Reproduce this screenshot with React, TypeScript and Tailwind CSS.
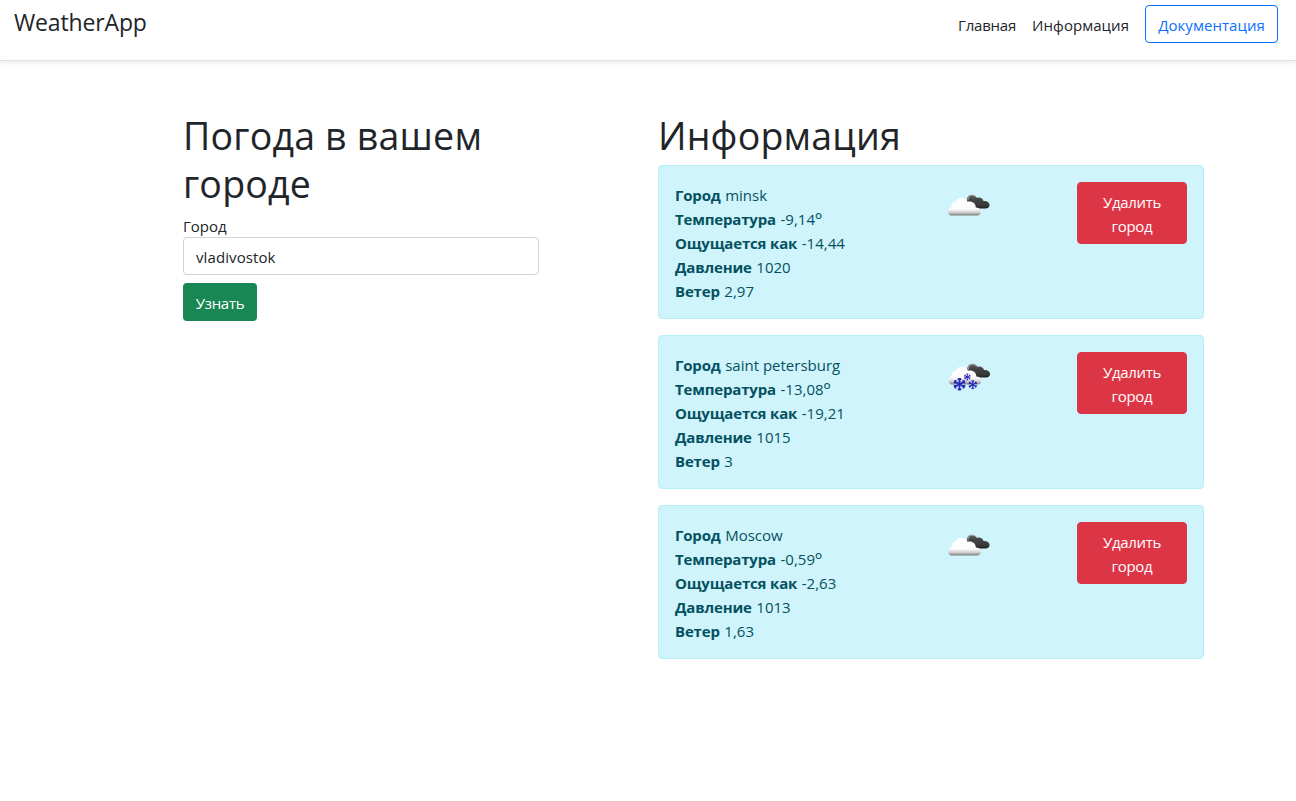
import React, { useState } from "react";

type City = {
  name: string;
  temp: string;
  feels: string;
  pressure: string;
  wind: string;
  snow?: boolean;
};

const cities: City[] = [
  { name: "minsk", temp: "-9,14", feels: "-14,44", pressure: "1020", wind: "2,97" },
  { name: "saint petersburg", temp: "-13,08", feels: "-19,21", pressure: "1015", wind: "3", snow: true },
  { name: "Moscow", temp: "-0,59", feels: "-2,63", pressure: "1013", wind: "1,63" },
];

function Flake({ x, y, r }: { x: number; y: number; r: number }) {
  return (
    <g transform={`translate(${x} ${y}) scale(${r})`} stroke="#2929bb" strokeWidth=".28" fill="none">
      {[0, 60, 120, 180, 240, 300].map((a) => (
        <path key={a} transform={`rotate(${a})`} d="M0 0V-1M-.26 -.92L0 -.68L.26 -.92" />
      ))}
    </g>
  );
}

function WeatherIcon({ snow, id }: { snow?: boolean; id: string }) {
  return (
    <svg className="block size-[50px]" viewBox="0 0 50 50">
      <defs>
        <linearGradient id={`${id}-light`} x1="0" y1="0" x2="0" y2="1">
          <stop offset="0" stopColor="#ffffff" />
          <stop offset=".62" stopColor="#fcfcfc" />
          <stop offset=".82" stopColor="#d2d2d2" />
          <stop offset="1" stopColor="#777777" />
        </linearGradient>
        <linearGradient id={`${id}-dark`} x1="0" y1="0" x2="0" y2="1">
          <stop offset="0" stopColor="#666666" />
          <stop offset=".35" stopColor="#444444" />
          <stop offset=".8" stopColor="#383838" />
          <stop offset="1" stopColor="#202020" />
        </linearGradient>
      </defs>
      <g transform={snow ? "translate(.5 -1)" : undefined}>
        <path
          d="M23 22.5C22 16 24 12.7 28 12.7C30.6 12.7 32 14 33 16C35.5 14.8 38.8 16 39.5 19C43 18.6 45.6 20.4 45.6 23C45.6 25.4 44 26.4 41.5 26.4H29Z"
          fill={`url(#${id}-dark)`}
        />
        <path d="M23.8 18.5C24 14.8 26 13.2 28.3 13.2C29.8 13.2 30.8 13.8 31.5 14.5" fill="none" stroke="#b5b5b5" strokeWidth=".9" />
        <path
          d="M8.5 33.6C5.8 33.6 4.1 31.8 4.1 29.4C4.1 27 5.7 25.3 7.7 25C6.8 22 8.7 20 11.4 20.1C12 17.5 14.3 15.7 17.3 15.7C20.2 15.7 22.4 17.2 23.5 19.8C28 18.8 31.8 21.2 31.8 25.4C34.8 25.5 36.9 27.2 36.9 29.7C36.9 32 35.3 33.6 33 33.6Z"
          fill={`url(#${id}-light)`}
        />
      </g>
      {snow && (
        <g>
          <Flake x={15.5} y={32.2} r={6.2} />
          <Flake x={28.8} y={32.7} r={4.4} />
          <Flake x={23.3} y={25} r={3.4} />
        </g>
      )}
    </svg>
  );
}

function CityCard({ city, index }: { city: City; index: number }) {
  const rows: [string, React.ReactNode][] = [
    ["Город", city.name],
    [
      "Температура",
      <>
        {city.temp}
        <span className="relative top-px text-[19px] leading-none">º</span>
      </>,
    ],
    ["Ощущается как", city.feels],
    ["Давление", city.pressure],
    ["Ветер", city.wind],
  ];
  return (
    <article className="mb-4 flex h-[154px] items-start rounded border border-[#b6effb] bg-[#cff4fc] p-4 text-[#055160]">
      <div className="w-[269px] shrink-0 pt-px">
        {rows.map(([label, value]) => (
          <div key={label} className="h-6 whitespace-nowrap">
            <b className="mr-[0.7px] font-bold tracking-[-0.17px]">{label}</b> <span>{value}</span>
          </div>
        ))}
      </div>
      <WeatherIcon snow={city.snow} id={`sky-${index}`} />
      <button className="ml-auto w-[110px] rounded border border-[#dc3545] bg-[#dc3545] px-3 pt-[7px] pb-[5px] text-center tracking-[-0.3px] text-white">
        Удалить город
      </button>
    </article>
  );
}

export default function App() {
  const [query, setQuery] = useState("vladivostok");
  return (
    <div className="min-h-[801px] bg-white font-['Open_Sans','Noto_Sans',sans-serif] text-[15px] leading-6 text-[#212529]">
      <header className="flex h-[61px] items-start justify-between border-b border-[#dee2e6] pr-[18px] pl-3.5 pt-[5px] shadow-[0_2px_4px_rgba(0,0,0,0.075)]">
        <a className="text-[23px] leading-[34px] tracking-[-0.15px]">WeatherApp</a>
        <nav className="flex items-center">
          <a className="mr-4 pt-0.5 tracking-[-0.2px]">Главная</a>
          <a className="mr-4 pt-0.5 tracking-[0.05px]">Информация</a>
          <a className="flex h-[38px] w-[133px] items-center justify-center rounded border border-[#0d6efd] pt-0.5 tracking-[0.05px] text-[#0d6efd]">
            Документация
          </a>
        </nav>
      </header>
      <main className="flex pl-[183px] pt-12">
        <section className="mr-[119px] w-[356px] shrink-0">
          <h1 className="mb-[5px] pt-[3px] text-[37.5px] leading-[48px] tracking-[0.2px]">Погода в вашем городе</h1>
          <label className="block h-6 pt-px" htmlFor="city">Город</label>
          <input
            id="city"
            className="block h-[38px] w-full rounded border border-[#ced4da] bg-white px-3 pt-0.5 tracking-[0.1px]"
            value={query}
            onChange={(e) => setQuery(e.target.value)}
          />
          <button className="mt-2 h-[38px] w-[74px] rounded bg-[#198754] pt-0.5 tracking-[-0.3px] text-white">Узнать</button>
        </section>
        <section className="w-[546px] shrink-0">
          <h1 className="mb-[5px] pt-[3px] text-[37.5px] leading-[48px] tracking-[0.2px]">Информация</h1>
          {cities.map((city, i) => (
            <CityCard key={city.name} city={city} index={i} />
          ))}
        </section>
      </main>
    </div>
  );
}
